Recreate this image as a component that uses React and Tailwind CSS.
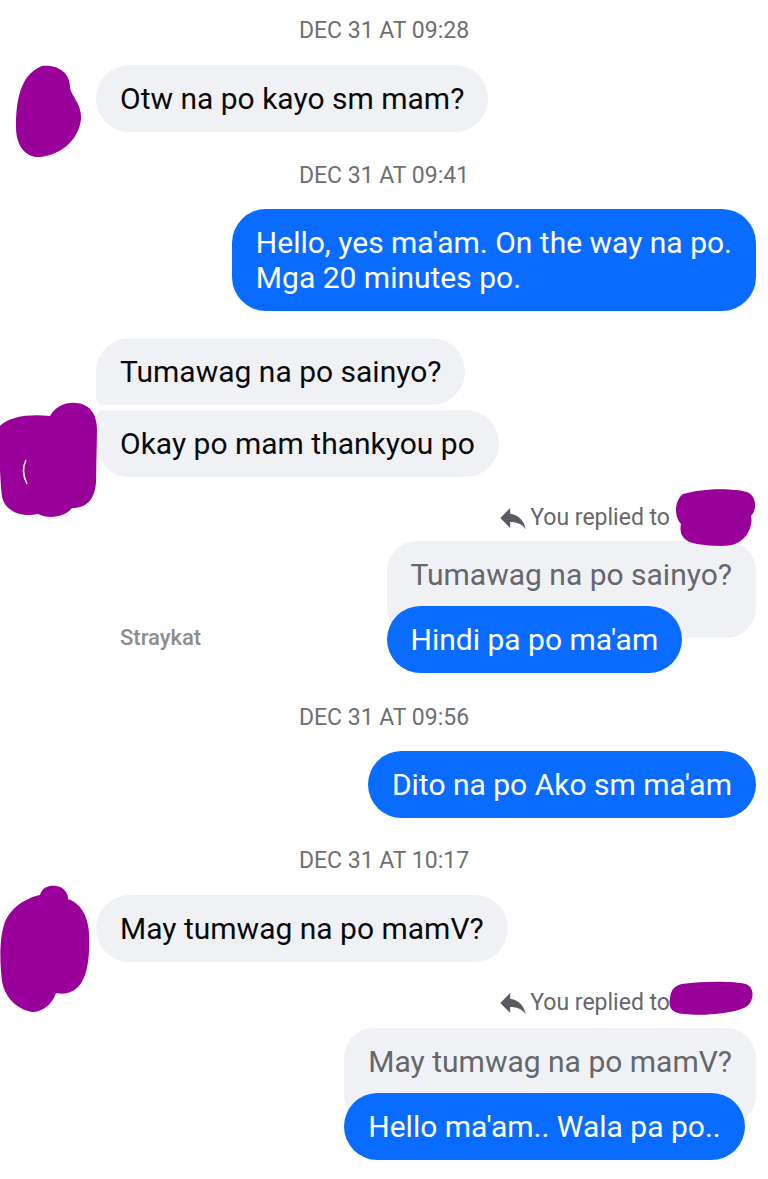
import React from "react";

const PURPLE = "#990099";

function Stamp({ children, className = "" }) {
  return (
    <div className={`-mr-3 text-center text-[23px] leading-[26px] text-[#6f6f6f] ${className}`}>{children}</div>
  );
}

function Theirs({ children, shape = "rounded-[34px]" }) {
  return (
    <div className={`bg-[#f0f1f5] text-[#0a0a0a] text-[30px] leading-[35px] px-6 py-[16px] ${shape}`}>
      {children}
    </div>
  );
}

function Mine({ children, className = "" }) {
  return (
    <div className={`bg-[#0a6cff] text-white text-[30px] leading-[35px] px-6 py-[16px] rounded-[34px] ${className}`}>
      {children}
    </div>
  );
}

function ReplyIcon() {
  return (
    <svg width="34" height="34" viewBox="0 0 24 24" className="-my-[4px]">
      <path fill="#585b60" d="M10 9V5l-7 7 7 7v-4.1c5 0 8.5 1.6 11 5.1-1-5-4-10-11-11z" />
    </svg>
  );
}

function Blob({ children, w, h, x = 0, y = 0 }) {
  return (
    <svg width={w} height={h} className="absolute" style={{ left: x, top: y }}>
      <g fill={PURPLE}>{children}</g>
    </svg>
  );
}

function Avatar({ kind }) {
  return (
    <div className="relative w-[96px] shrink-0 self-stretch">
      {kind === 1 && (
        <Blob w={90} h={100} x={0} y={0}>
          <path d="M42 1 C58 -1 70 8 70 22 C70 30 82 38 81 54 C79 74 62 90 40 92 C25 93 16 80 16 62 C16 42 18 10 42 1 Z" />
        </Blob>
      )}
      {kind === 2 && (
        <Blob w={100} h={120} x={0} y={-8}>
          <path d="M0 24 C10 14 30 12 50 14 C56 4 66 0 76 1 C90 2 97 12 97 28 L96 80 C95 96 88 106 72 106 C66 114 50 118 38 112 C20 116 4 108 2 94 C0 80 -1 50 0 24 Z" />
          <path d="M26 58 C22 66 23 74 27 82" stroke="#ffffff" strokeWidth="1.5" fill="none" />
        </Blob>
      )}
      {kind === 4 && (
        <Blob w={96} h={130} x={0} y={-10}>
          <path d="M40 10 C42 2 50 0 56 1 C64 2 68 8 68 14 C80 18 88 30 89 48 C90 70 88 92 78 102 C72 108 64 110 56 108 C52 120 40 130 28 126 C14 122 4 110 2 96 C0 80 -1 56 4 40 C8 26 22 14 40 10 Z" />
        </Blob>
      )}
    </div>
  );
}

function ReplyHeader({ kind }) {
  return (
    <div className="flex items-center justify-end h-[26px] pr-[4px] text-[23px] leading-[26px] text-[#65676b]">
      <ReplyIcon />
      <span>You replied to</span>
      <div className="relative w-[80px] h-[26px] ml-[2px]">
        {kind === 1 ? (
          <Blob w={84} h={62} x={1} y={-17}>
            <path d="M10 6 C30 0 60 0 74 4 C84 8 84 22 78 28 C80 36 76 48 66 54 C56 60 40 58 24 56 C10 54 6 46 8 36 C2 30 0 14 10 6 Z" />
          </Blob>
        ) : (
          <Blob w={88} h={40} x={-4} y={-9}>
            <path d="M14 3 C36 0 66 0 78 3 C88 7 86 23 76 27 C62 33 34 35 16 33 C4 32 0 27 2 17 C3 9 6 5 14 3 Z" />
          </Blob>
        )}
      </div>
    </div>
  );
}

function QuotedReply({ quote, reply }) {
  return (
    <div className="flex flex-col items-start">
      <div className="bg-[#f0f1f5] text-[#65676b] text-[30px] leading-[35px] px-6 pt-[16px] pb-[46px] rounded-[30px]">
        {quote}
      </div>
      <Mine className="-mt-[32px]">{reply}</Mine>
    </div>
  );
}

export default function App() {
  return (
    <div
      className="w-[768px] h-[1179px] bg-white overflow-hidden pr-3 pt-[18px] flex flex-col"
      style={{ fontFamily: "Roboto, 'Noto Sans', sans-serif" }}
    >
      <Stamp>DEC 31 AT 09:28</Stamp>

      <div className="flex items-start mt-[21px]">
        <Avatar kind={1} />
        <Theirs>Otw na po kayo sm mam?</Theirs>
      </div>

      <Stamp className="mt-[31px]">DEC 31 AT 09:41</Stamp>

      <div className="flex justify-end mt-[20px]">
        <Mine className="py-[15px]">
          Hello, yes ma'am. On the way na po.
          <br />
          Mga 20 minutes po.
        </Mine>
      </div>

      <div className="flex flex-col gap-[5px] mt-[27px]">
        <div className="flex items-start">
          <div className="w-[96px] shrink-0" />
          <Theirs shape="rounded-[34px] rounded-bl-[8px]">Tumawag na po sainyo?</Theirs>
        </div>
        <div className="flex items-start">
          <Avatar kind={2} />
          <Theirs shape="rounded-[34px] rounded-tl-[8px]">Okay po mam thankyou po</Theirs>
        </div>
      </div>

      <div className="flex items-end justify-between mt-[28px]">
        <div className="pl-[120px] mb-[22px] text-[22px] leading-[26px] font-medium text-[#8d8d8d]">Straykat</div>
        <div className="flex flex-col items-end">
          <ReplyHeader kind={1} />
          <div className="mt-[10px]">
            <QuotedReply quote="Tumawag na po sainyo?" reply="Hindi pa po ma'am" />
          </div>
        </div>
      </div>

      <Stamp className="mt-[32px]">DEC 31 AT 09:56</Stamp>

      <div className="flex justify-end mt-[20px]">
        <Mine>Dito na po Ako sm ma'am</Mine>
      </div>

      <Stamp className="mt-[30px]">DEC 31 AT 10:17</Stamp>

      <div className="flex items-start mt-[21px]">
        <Avatar kind={4} />
        <Theirs>May tumwag na po mamV?</Theirs>
      </div>

      <div className="flex flex-col items-end mt-[28px]">
        <ReplyHeader kind={2} />
        <div className="mt-[12px]">
          <QuotedReply quote="May tumwag na po mamV?" reply="Hello ma'am.. Wala pa po.." />
        </div>
      </div>
    </div>
  );
}
